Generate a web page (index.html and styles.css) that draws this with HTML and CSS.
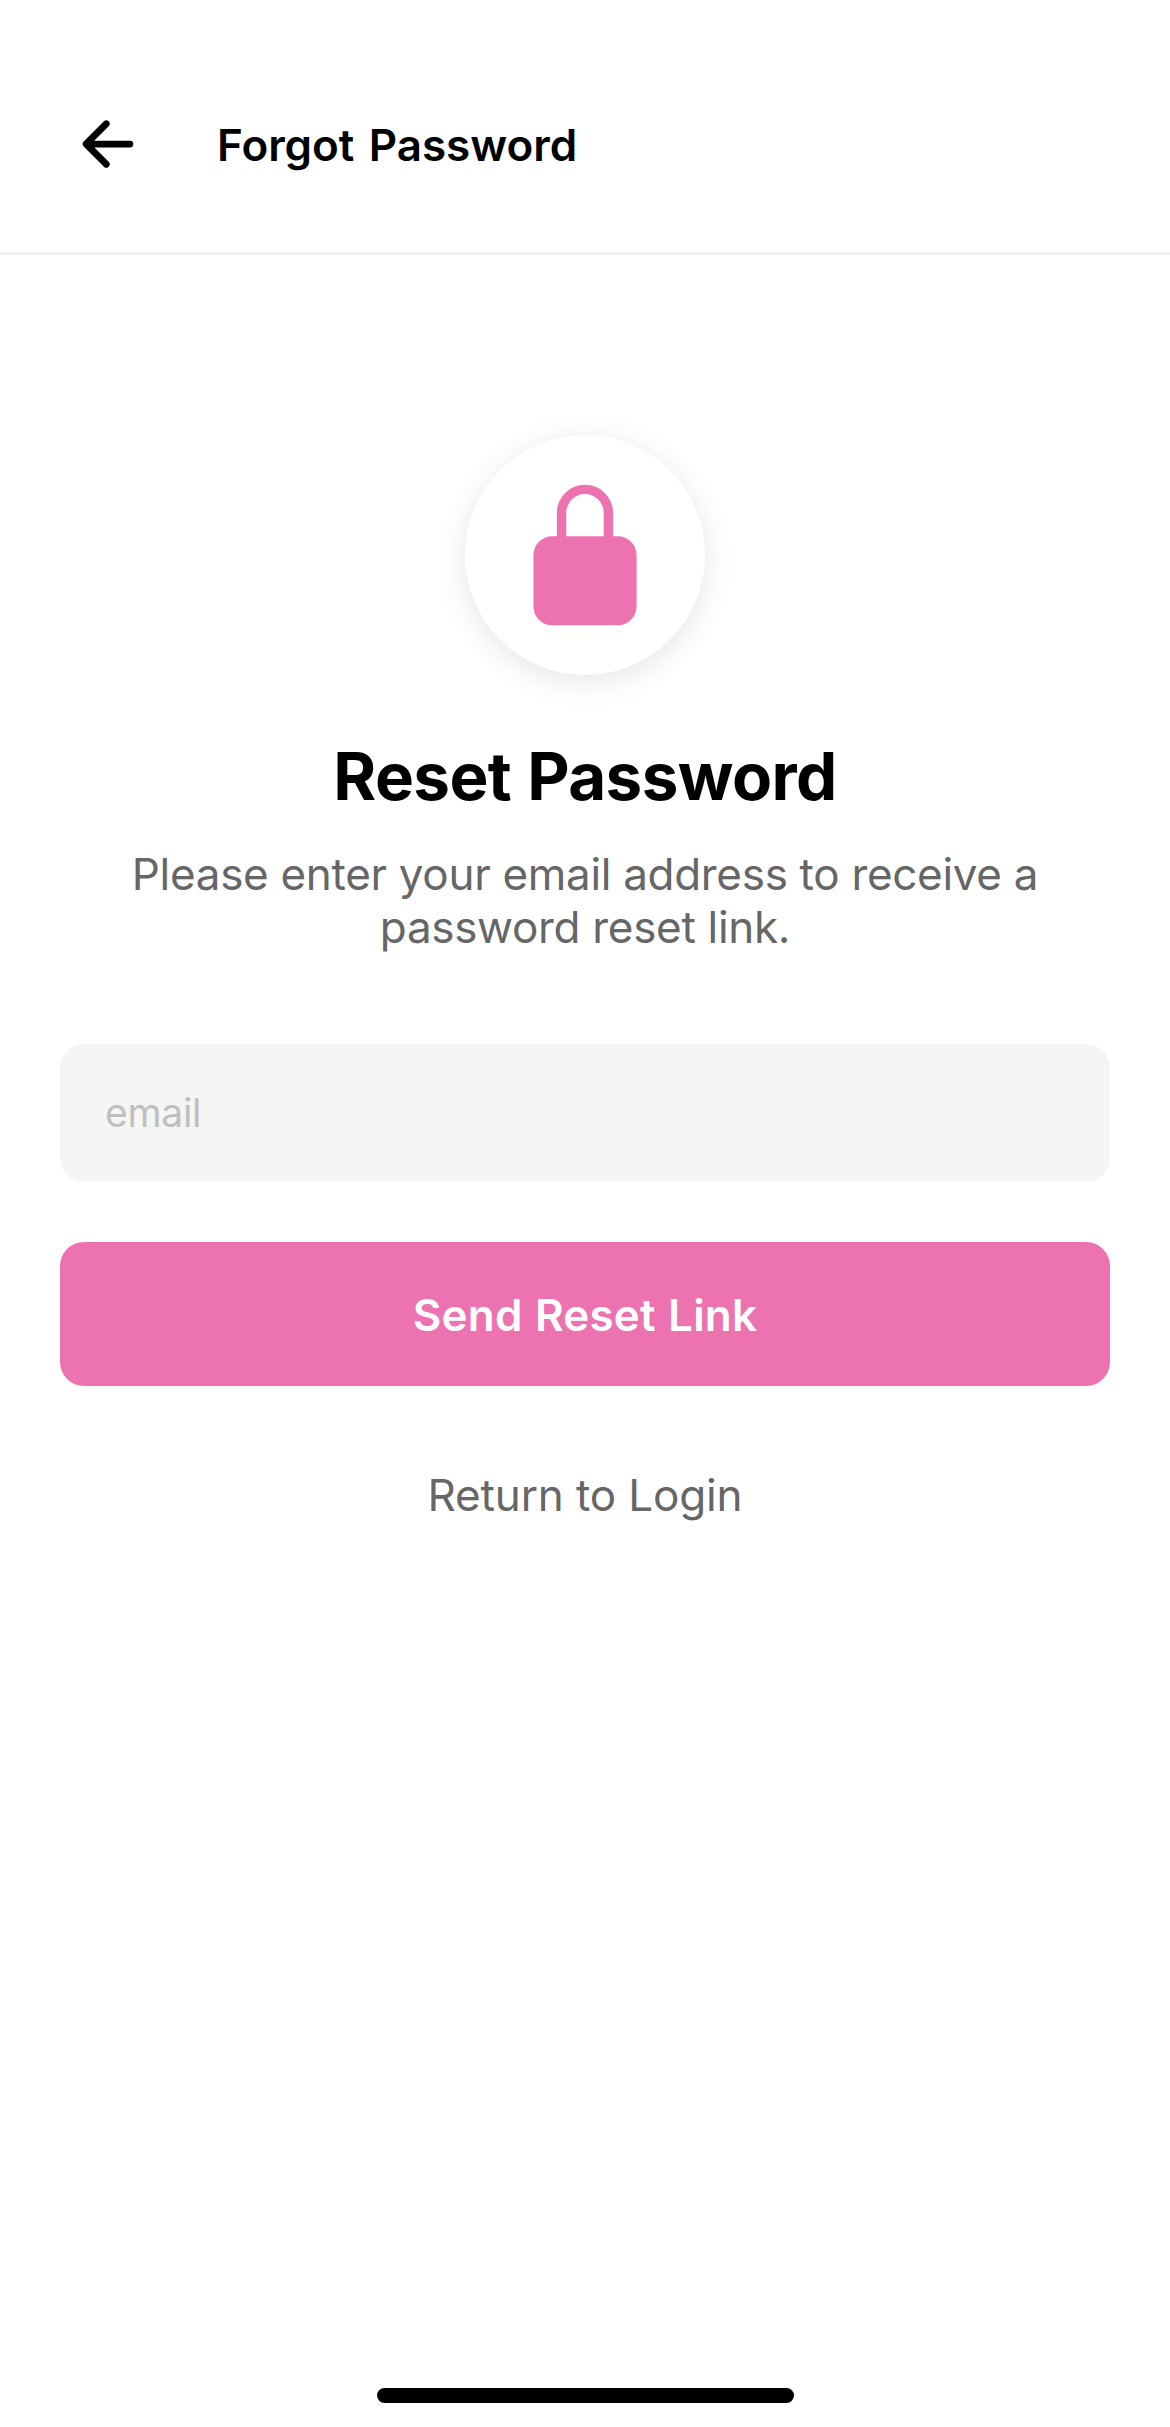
FILE: index.html
```html
<!DOCTYPE html>
<html lang="en">
<head>
  <meta charset="utf-8">
  <title>Forgot Password</title>
  <link rel="stylesheet" href="styles.css">
</head>
<body>
  <div class="screen">
    <header class="header">
      <svg class="back-icon" viewBox="0 0 512 512" role="img" aria-label="Back">
        <path d="M244 400 100 256l144-144M120 256h292" fill="none" stroke="currentColor" stroke-width="48" stroke-linecap="round" stroke-linejoin="round"/>
      </svg>
      <h1 class="header-title">Forgot Password</h1>
    </header>
    <main class="content">
      <div class="badge">
        <svg class="lock-icon" viewBox="0 0 512 512" aria-hidden="true">
          <path fill="currentColor" d="M368 192h-16v-80a96 96 0 1 0-192 0v80h-16a64 64 0 0 0-64 64v176a64 64 0 0 0 64 64h224a64 64 0 0 0 64-64V256a64 64 0 0 0-64-64zm-48 0H192v-80a64 64 0 1 1 128 0z"/>
        </svg>
      </div>
      <h2 class="title">Reset Password</h2>
      <p class="subtitle">Please enter your email address to receive a password reset link.</p>
      <input class="email" type="email" placeholder="email">
      <button class="submit" type="button">Send Reset Link</button>
      <a class="return">Return to Login</a>
    </main>
    <div class="home-indicator"></div>
  </div>
</body>
</html>
```
FILE: styles.css
```css
* {
  box-sizing: border-box;
}

body {
  margin: 0;
  background: #fff;
  font-family: Inter, "Liberation Sans", sans-serif;
}

.screen {
  display: flex;
  flex-direction: column;
  height: 2427px;
  padding-bottom: 24px;
}

.header {
  display: flex;
  align-items: flex-start;
  gap: 73px;
  height: 255px;
  padding: 108px 72px 0;
  border-bottom: 3px solid #efefef;
}

.back-icon {
  width: 72px;
  height: 72px;
  color: #000;
}

.header-title {
  margin: 0;
  font-size: 44px;
  font-weight: 600;
  line-height: 74px;
  letter-spacing: -0.05px;
  word-spacing: 3.5px;
}

.content {
  flex: 1;
  display: flex;
  flex-direction: column;
  align-items: center;
  padding: 180px 60px 0;
}

.badge {
  display: flex;
  align-items: center;
  justify-content: center;
  width: 240px;
  height: 240px;
  border-radius: 50%;
  background: #fff;
  box-shadow: 0 6px 30px rgba(0, 0, 0, 0.1);
}

.lock-icon {
  width: 150px;
  height: 150px;
  color: #ed72b0;
}

.title {
  margin: 62px 0 0;
  font-size: 65.5px;
  font-weight: 700;
  line-height: 80px;
  letter-spacing: -0.6px;
  word-spacing: 1px;
}

.subtitle {
  margin: 31px 0 0;
  color: #666;
  font-size: 44px;
  line-height: 53px;
  letter-spacing: -0.31px;
  text-align: center;
}

.email {
  width: 100%;
  height: 138px;
  margin-top: 90px;
  padding: 0 45px 2px;
  border: 0;
  border-radius: 24px;
  background: #f5f5f5;
  font-family: inherit;
  font-size: 39px;
  letter-spacing: -0.3px;
}

.email::placeholder {
  color: #bfbfc0;
}

.submit {
  width: 100%;
  height: 144px;
  margin-top: 60px;
  padding: 2px 0 0;
  border: 0;
  border-radius: 24px;
  background: #ed72b0;
  color: #fff;
  font-family: inherit;
  font-size: 44px;
  font-weight: 600;
  letter-spacing: 0.2px;
  word-spacing: 1px;
}

.return {
  margin-top: 82px;
  color: #666;
  font-size: 44px;
  line-height: 54px;
  letter-spacing: -0.14px;
}

.home-indicator {
  align-self: center;
  width: 417px;
  height: 15px;
  border-radius: 8px;
  background: #000;
}
```
